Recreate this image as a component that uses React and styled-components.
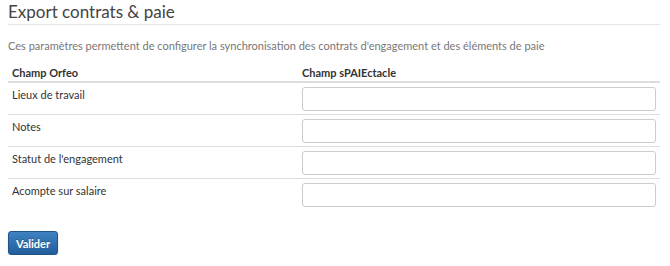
import React from "react";
import styled, { createGlobalStyle } from "styled-components";

const GlobalStyle = createGlobalStyle`
  body {
    margin: 0;
    background: #fff;
    font-family: Lato, "Open Sans", sans-serif;
    font-size: 11px;
    color: #333;
  }
`;

const Page = styled.div`
  padding: 0 10px 0 8px;
`;

const Title = styled.h2`
  margin: 0;
  padding: 2px 0 3px;
  font-size: 17px;
  font-weight: 400;
  line-height: 19px;
  color: #444;
  border-bottom: 1px solid #e5e5e5;
`;

const Description = styled.p`
  margin: 13px 0 0;
  line-height: 15px;
  color: #777;
`;

const Table = styled.div`
  margin-top: 8px;
`;

const Row = styled.div`
  display: grid;
  grid-template-columns: 290px 1fr;
  border-bottom: ${(p) => (p.$head ? "2px solid #ddd" : p.$last ? "none" : "1px solid #ddd")};
`;

const Cell = styled.div`
  padding: ${(p) => (p.$head ? "4px 4px 1px" : "4px 4px 3px")};
  line-height: 15px;
  font-weight: ${(p) => (p.$head ? 700 : 400)};
  color: #333;
`;

const Input = styled.input`
  display: block;
  box-sizing: border-box;
  width: 100%;
  height: 24px;
  margin: 0;
  border: 1px solid #ccc;
  border-radius: 3px;
  background: #fff;
  font: inherit;
`;

const Button = styled.button`
  margin-top: 21px;
  width: 50px;
  height: 24px;
  padding: 0;
  border: 1px solid #1f5489;
  border-radius: 3px;
  background: linear-gradient(to bottom, #3f82c2, #215f9b);
  color: #fff;
  font-family: Lato, sans-serif;
  font-size: 11px;
  font-weight: 700;
  text-shadow: 0 -1px 0 rgba(0, 0, 0, 0.25);
  box-shadow: 0 1px 2px rgba(0, 0, 0, 0.15);
`;

const fields = [
  "Lieux de travail",
  "Notes",
  "Statut de l'engagement",
  "Acompte sur salaire",
];

export default function App() {
  return (
    <Page>
      <GlobalStyle />
      <Title>Export contrats &amp; paie</Title>
      <Description>
        Ces paramètres permettent de configurer la synchronisation des contrats
        d'engagement et des éléments de paie
      </Description>
      <Table>
        <Row $head>
          <Cell $head>Champ Orfeo</Cell>
          <Cell $head>Champ sPAIEctacle</Cell>
        </Row>
        {fields.map((f, i) => (
          <Row key={f} $last={i === fields.length - 1}>
            <Cell>{f}</Cell>
            <Cell>
              <Input type="text" />
            </Cell>
          </Row>
        ))}
      </Table>
      <Button>Valider</Button>
    </Page>
  );
}
